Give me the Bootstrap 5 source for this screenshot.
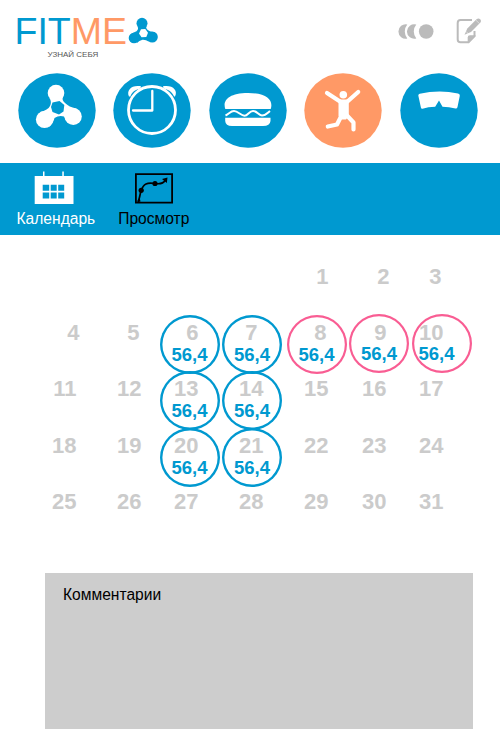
<!DOCTYPE html>
<html lang="ru">
<head>
<meta charset="utf-8">
<meta name="viewport" content="width=device-width, initial-scale=1">
<title>FITME</title>
<link rel="stylesheet" href="https://cdn.jsdelivr.net/npm/bootstrap@5.3.0/dist/css/bootstrap.min.css">
<style>
:root{--fit-blue:#0099d0;--fit-orange:#ff9966;--fit-grey:#cbcbcb;--fit-pink:#f95d93}
body{font-family:"Liberation Sans",Arial,sans-serif;background:#fff;width:500px;height:750px;overflow:hidden}
svg{display:block;flex:none}
.topbar{height:73px;padding:13px 19px 0 14.5px}
.brand-name{font-size:37.5px;line-height:36px;color:var(--fit-blue)}
.brand-name span{color:var(--fit-orange)}
.brand-sub{font-size:8px;line-height:9px;color:#555;padding-left:33px;margin-top:1px}
.brand-mark{margin:4px 0 0 1px}
.tools{gap:22px;padding-top:4px}
.modes{height:89.5px;padding:0 22.500px 0 17.500px}
.modes a{width:78px;height:75px}
.tabs-bar{height:72px;background:var(--fit-blue);padding:7px 16px 0 16.5px}
.tabs-bar a{font-size:15.6px;line-height:18px;color:#fff;gap:5px}
.tabs-bar a.current{color:#000;margin-left:23px}
.tabs-bar svg{margin-left:-4px}
.tabs-bar .current svg{margin-left:1px}
.month{display:grid;grid-template-columns:76.5px repeat(1,65px) 57px 65px 65px 58px 57px;grid-auto-rows:56.2px;padding-top:31.5px;height:338.5px}
.day{position:relative;text-align:right;font-weight:700;font-size:22px;line-height:22px;color:var(--fit-grey)}
.day.out3{left:3px}.day.in2{left:-2px}.day.in6{left:-6px}
.ring{position:absolute;width:60px;height:59px;box-shadow:inset 0 0 0 2.4px var(--fit-blue);border-radius:50%;top:-7px;right:-21px;color:var(--fit-blue);font-size:18.5px;line-height:18px;text-align:center;padding-top:31px}
.ring.r-b{right:-18.5px}
.in6 .ring.r-b{right:-24.5px}
.ring.pink{box-shadow:inset 0 0 0 2.2px var(--fit-pink);right:-20px}
.ring.r-d.pink{right:-22.5px;top:-8px}
.ring.r-e.pink{right:-28px;top:-8.5px;text-align:left;padding-left:7px}
.notes{width:428px;height:156px;margin-left:45px;background:#cdcdcd;padding:13px 18px;font-size:15.6px;line-height:18px;color:#000}
</style>
<script src="https://cdn.jsdelivr.net/npm/bootstrap@5.3.0/dist/js/bootstrap.bundle.min.js"></script>
</head>
<body>
<header>
  <div class="topbar d-flex justify-content-between align-items-start">
    <div class="d-flex align-items-start">
      <div>
        <div class="brand-name">FIT<span>ME</span></div>
        <div class="brand-sub">УЗНАЙ СЕБЯ</div>
      </div>
      <svg class="brand-mark" width="31" height="27" viewBox="0 0 31 27"><g fill="#0099d0"><circle cx="14" cy="6.300" r="5.500"/><circle cx="6" cy="21" r="5.300"/><circle cx="24.200" cy="20" r="5.600"/><path d="M9.500 9.500Q11 12 8.500 14.200L3.500 16.500L9 26Q11 23.500 14.500 22.700Q18 22.500 20.500 24.500L27 15.200Q21 15 18.700 12Q17.700 10.500 18.700 9Z"/></g><path d="M13 12.300L17.300 12L20 15.700L18.300 20L13.500 20.300L11 16.500Z" fill="#fff"/></svg>
    </div>
    <div class="tools d-flex">
      <svg width="36" height="28" viewBox="0 0 36 28" fill="#bbb"><circle cx="28.200" cy="14.500" r="7.300"/><path d="M18.300 7.500A7.300 7.300 0 1 0 18.300 21.500A11 11 0 0 1 18.300 7.500ZM9.300 7.500A7.200 7.200 0 1 0 9.300 21.500A11 11 0 0 1 9.300 7.500Z"/></svg>
      <svg width="25" height="28" viewBox="0 0 25 28"><path d="M16 3H4.500Q1.700 3 1.700 6V22.500Q1.700 25.300 4.500 25.300H12.500L18.500 19V14" fill="none" stroke="#bbb" stroke-width="2"/><path d="M11.700 26V20.500Q11.700 18.300 14 18.300H19.500V19Z" fill="#bbb"/><path d="M19.500 19L12.500 26.200V19H19.500Z" fill="#bbb"/><path d="M8.500 17.800L11.300 11.500L20.500 2.300Q22.500 .6 24.200 2.300Q25.700 4 24.200 5.800L15 15Z" fill="#bbb"/><path d="M19.900 3.200L23.400 6.500M10.300 14.800L12 16.300" stroke="#fff" stroke-width=".5"/></svg>
    </div>
  </div>

  <nav class="modes d-flex justify-content-between" aria-label="Разделы">
    <a href="#"><svg width="78" height="75" viewBox="0 0 78 75"><ellipse cx="39" cy="37.500" rx="38.700" ry="37.300" fill="#0099d0"/><g fill="#fff"><circle cx="38" cy="20" r="8.300"/><circle cx="26.500" cy="46.500" r="8.600"/><circle cx="55.300" cy="43.500" r="8.500"/><path d="M31.500 25Q34 29 32 33Q30 37 22 39L31 54Q35.500 50 36.500 45Q41 42 46 43.500Q47 47.500 50.500 50.500L58 35.500Q51 34 47 30Q43.500 27 45 24Z"/></g><path d="M34.500 29.500L41.500 28L46.300 32L45.500 38.500L41 41.500L34.500 39L33 34Z" fill="#0099d0"/></svg></a>
    <a href="#"><svg width="78" height="75" viewBox="0 0 78 75"><ellipse cx="39" cy="37.500" rx="38.700" ry="37.300" fill="#0099d0"/><g fill="#fff"><path d="M16 23.500C13 17 19 11.500 28 13.300L27.500 15.500C22 16.500 18 20 17.500 23.500ZM62 23.500C65.500 17 59 11.500 50 13.300L50.500 15.500C56 16.500 60 20 61 23.500Z"/></g><circle cx="39" cy="37" r="23.500" fill="none" stroke="#fff" stroke-width="2.800"/><path d="M39.300 18V37.500H20" fill="none" stroke="#fff" stroke-width="2.300" stroke-linecap="round" stroke-linejoin="round"/></svg></a>
    <a href="#"><svg width="78" height="75" viewBox="0 0 78 75"><ellipse cx="39" cy="37.500" rx="38.700" ry="37.300" fill="#0099d0"/><path d="M16.300 36C13.500 28 19 20 39 20S64.500 28 61.700 36ZM16.200 44.700H61.500V48Q61 53 54 53H23Q16.500 53 16.200 48Z" fill="#fff"/><path d="M16.500 42.500C20 41 21.500 38 25 38C29 38 32 42.700 35.500 42.700C39 42.700 40 38 44 38C48 38 50 42.500 53 42.500C56.500 42.500 58.500 40 61 38" fill="none" stroke="#fff" stroke-width="2"/></svg></a>
    <a href="#"><svg width="78" height="75" viewBox="0 0 78 75"><ellipse cx="39" cy="37.500" rx="38.700" ry="37.300" fill="#ff9966"/><circle cx="39.300" cy="21.800" r="3.800" fill="#fff"/><path d="M35 26.500H43.500L44.800 28V43L42 46.500H37.500L34.500 43V28Z" fill="#fff"/><path d="M23 20L36 28.500M54.200 19L43.500 28.500M37.300 43L33 51.500L23.800 53.500M42.500 42L49.500 49.500V56.500" fill="none" stroke="#fff" stroke-width="4.200" stroke-linecap="round" stroke-linejoin="round"/></svg></a>
    <a href="#"><svg width="78" height="75" viewBox="0 0 78 75"><ellipse cx="39" cy="37.500" rx="38.700" ry="37.300" fill="#0099d0"/><path d="M18.300 22.500Q18.200 21.200 19.700 20.800Q39 16.500 58 20.500Q60 21 59.800 22.700L57.500 34Q57.200 35.700 55.500 35.500Q49 34 42.500 33.800L39 27.500L35.200 33.800Q28 34 22.500 35.700Q21.200 36 20.900 34.500Z" fill="#fff"/></svg></a>
  </nav>

  <nav class="tabs-bar d-flex align-items-start" aria-label="Вид">
    <a href="#" class="d-flex flex-column align-items-center text-decoration-none"><svg width="40" height="35" viewBox="0 0 40 35"><path d="M.7 6H9V1.500H10.500V6H28.300V1.500H29.800V6H39.500V34H.7Z" fill="#fff"/><path d="M8.700 14.700h6.500v6H8.700zM16.700 14.700h6v6h-6zM24.200 14.700h6v6h-6zM8.700 22.500h6.500v6H8.700zM16.700 22.500h6v6h-6zM24.200 22.500h6v6h-6z" fill="#0099d0"/></svg><span>Календарь</span></a>
    <a href="#" class="current d-flex flex-column align-items-center text-decoration-none"><svg width="38" height="35" viewBox="0 0 38 35"><path d="M.9 4.200H37.100V32.600H.9Z" fill="none" stroke="#000" stroke-width="1.800"/><path d="M3 31.500C5 29 4.500 24 6.500 20C8.500 13.500 12 12.500 20 13.500C25 14.200 28.500 13.500 30 10.500" fill="none" stroke="#000" stroke-width="1.700"/><path d="M2 32.500L5.500 31.500L4.500 27Z M27 9L32.500 7.500L31.800 13Z"/><circle cx="6.200" cy="20.300" r="2.600"/><circle cx="20" cy="13.500" r="2.600"/></svg><span>Просмотр</span></a>
  </nav>
</header>

<main>
  <section class="month">
    <div></div><div></div><div></div><div></div>
    <div class="day">1</div><div class="day out3">2</div><div class="day in2">3</div>
    <div class="day out3">4</div><div class="day in2">5</div>
    <div class="day">6<div class="ring">56,4</div></div>
    <div class="day in6">7<div class="ring r-b">56,4</div></div>
    <div class="day in2">8<div class="ring pink">56,4</div></div>
    <div class="day">9<div class="ring r-d pink">56,4</div></div>
    <div class="day">10<div class="ring r-e pink">56,4</div></div>
    <div class="day">11</div><div class="day">12</div>
    <div class="day">13<div class="ring">56,4</div></div>
    <div class="day">14<div class="ring r-b">56,4</div></div>
    <div class="day">15</div><div class="day">16</div><div class="day">17</div>
    <div class="day">18</div><div class="day">19</div>
    <div class="day">20<div class="ring">56,4</div></div>
    <div class="day">21<div class="ring r-b">56,4</div></div>
    <div class="day">22</div><div class="day">23</div><div class="day">24</div>
    <div class="day">25</div><div class="day">26</div><div class="day">27</div><div class="day">28</div><div class="day">29</div><div class="day">30</div><div class="day">31</div>
  </section>
  <section class="notes">Комментарии</section>
</main>
</body>
</html>
